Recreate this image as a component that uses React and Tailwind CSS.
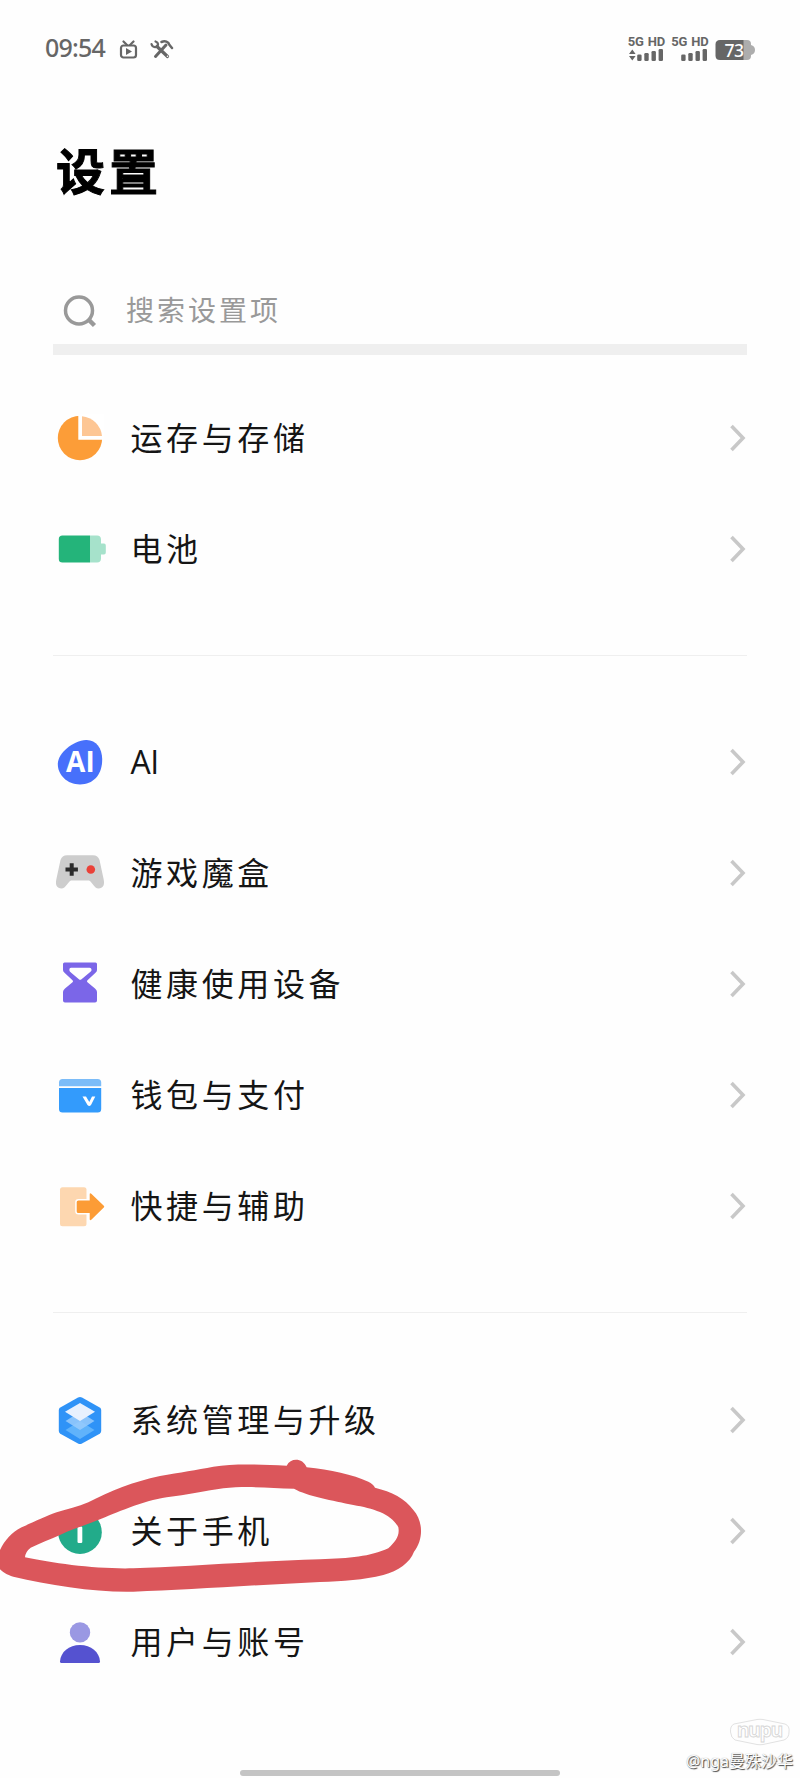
const StorageIcon = () => (
  <>
    <circle cx="26" cy="26" r="22.2" fill="#fc9d38" />
    <path d="M26 26V2H50V26Z" fill="#fff" />
    <path d="M28 24V4.2A22 22 0 0 1 48 24Z" fill="#fdc694" />
    <path d="M26 3V26H49" fill="none" stroke="#fff" strokeWidth="3.4" />
  </>
);

const BatteryIcon = () => (
  <>
    <path d="M36 12.5H43Q47 12.5 47 16.5V20.500H50Q51.800 20.500 51.800 22.500V29.500Q51.800 31.500 50 31.500H47V35.500Q47 39.500 43 39.500H36Z" fill="#a6e2cb" />
    <path d="M36 12.5H8.5Q4.8 12.5 4.8 16V36Q4.8 39.5 8.5 39.5H36Z" fill="#24b47a" />
  </>
);

const AiIcon = () => (
  <>
    <path d="M32 3.9C42 3.5 48 12 48.2 23C48.4 38 40 48.4 26 48.4C13 48.4 3.8 39 3.8 28C3.8 17 19 4.5 32 3.9Z" fill="#4770fb" />
    <text x="26.4" y="36.2" textAnchor="middle" fontSize="28" fontWeight="700" fill="#fff" fontFamily="Open Sans, sans-serif" textLength="29">AI</text>
  </>
);

const GameIcon = () => (
  <>
    <path d="M13 8.2H39Q44 8.2 45.5 13L49.6 32C51 38 49 41.5 44.5 41.5C40 41.5 38.5 35 35 33.5H17C13.5 35 12 41.5 7.5 41.5C3 41.5 1 38 2.4 32L6.5 13Q8 8.2 13 8.2Z" fill="#cdcdcd" />
    <path d="M17.7 16.3V28.7M11.5 22.5H23.9" stroke="#2b2b2b" strokeWidth="4" />
    <circle cx="36.8" cy="22.5" r="4.3" fill="#ea4138" />
  </>
);

const HourglassIcon = () => (
  <>
    <path d="M10.5 4.5H41.5Q43 4.5 43 6V12Q43 13.5 41.5 14.8L33.5 22.3Q32.3 23.3 33.5 24.3L41 30.5Q43 32 43 34V42.5Q43 44.5 41 44.5H11Q9 44.5 9 42.5V34Q9 32 11 30.5L18.5 24.3Q19.7 23.3 18.5 22.3L10.5 14.8Q9 13.5 9 12V6Q9 4.5 10.5 4.5Z" fill="#7b66e8" />
    <path d="M17 9.8H35.5Q37.7 9.8 37.5 12.5Q37.3 13.3 35 15L27.5 21.2Q26.2 22.3 24.9 21.2L17.5 15Q15.3 13.3 15.3 12Q15.3 9.8 17 9.8Z" fill="#fff" />
  </>
);

const WalletIcon = () => (
  <>
    <path d="M5 17.3V13.5Q5 10 8.5 10H43.7Q47.2 10 47.2 13.5V17.3Z" fill="#7bbcf8" />
    <path d="M5 18.9H47.2V40Q47.2 43.6 43.7 43.6H8.5Q5 43.6 5 40Z" fill="#339bfc" />
    <path d="M28.5 27.5H32L35.3 33L38 27.5H41.3L37 36Q35.3 38 33.5 36Z" fill="#fff" />
  </>
);

const ShortcutIcon = () => (
  <>
    <rect x="6" y="7.2" width="26.5" height="39" rx="2.5" fill="#fdd7b0" />
    <path
      d="M24.5 20.5H35.7V14.5Q35.7 12.5 37.3 13.8L49.8 25.8Q50.8 26.7 49.8 27.6L37.3 39.8Q35.7 41 35.7 39V33H24.5Q22.7 33 22.7 31.5V22Q22.7 20.5 24.5 20.5Z"
      fill="#fc9c36"
      stroke="#fff"
      strokeWidth="3"
      paintOrder="stroke"
    />
  </>
);

const SystemIcon = () => (
  <>
    <path d="M24 3.6Q26 2.5 28 3.6L45.7 13.4Q47.2 14.3 47.2 16V37Q47.2 38.8 45.7 39.7L28 49.5Q26 50.6 24 49.5L6.3 39.7Q4.8 38.8 4.8 37V16Q4.8 14.3 6.3 13.4Z" fill="#2f93f7" />
    <path d="M26 27L40.5 36L26 45L11.5 36Z" fill="#60b3fb" />
    <path d="M26 18L40.5 27L26 36L11.5 27Z" fill="#99cbfc" fillOpacity="0.85" />
    <path d="M26 9L41 17.7L26 27L11 17.7Z" fill="#e8f1fe" />
  </>
);

const AboutIcon = () => (
  <>
    <circle cx="26" cy="27.2" r="21.8" fill="#22ab8a" />
    <circle cx="26" cy="16" r="2.7" fill="#fff" />
    <rect x="23.5" y="21.5" width="4.8" height="16.5" rx="1.2" fill="#fff" />
  </>
);

const UserIcon = () => (
  <>
    <circle cx="26" cy="16.4" r="10.2" fill="#9a98e3" />
    <path d="M6 45.5C6.5 36 15 29 26 29C37 29 45.5 36 46 45.5Q46 47 44.5 47H7.5Q6 47 6 45.5Z" fill="#5552d0" />
  </>
);

const groups = [
  [
    { label: '运存与存储', Icon: StorageIcon },
    { label: '电池', Icon: BatteryIcon },
  ],
  [
    { label: 'AI', Icon: AiIcon },
    { label: '游戏魔盒', Icon: GameIcon },
    { label: '健康使用设备', Icon: HourglassIcon },
    { label: '钱包与支付', Icon: WalletIcon },
    { label: '快捷与辅助', Icon: ShortcutIcon },
  ],
  [
    { label: '系统管理与升级', Icon: SystemIcon },
    { label: '关于手机', Icon: AboutIcon },
    { label: '用户与账号', Icon: UserIcon },
  ],
];

function Row({ label, Icon }) {
  return (
    <div className="flex h-[111px] items-center pl-[54px] pr-[53px]">
      <svg className="h-[52px] w-[52px] shrink-0" viewBox="0 0 52 52">
        <Icon />
      </svg>
      <span className={`ml-[24.5px] flex-1 whitespace-nowrap pt-px text-[32px] leading-[48px] text-[#151515] ${label === 'AI' ? 'font-["Open_Sans","Noto_Sans_CJK_SC",sans-serif] tracking-[-0.5px]' : 'tracking-[3.6px]'}`}>
        {label}
      </span>
      <svg className="h-7 w-5" viewBox="0 0 20 28" fill="none" stroke="#c8c8c8" strokeWidth="3.6">
        <path d="M4.5 2L16 14L4.5 26" />
      </svg>
    </div>
  );
}

function Signal({ arrows }) {
  return (
    <div className="flex w-[37px] flex-col items-end">
      <span className='h-3 whitespace-nowrap font-["Roboto",sans-serif] text-[13px] font-bold leading-3 tracking-[-0.2px] [word-spacing:1px]'>5G HD</span>
      <svg className="mt-px h-3 w-[37px]" viewBox="0 0 37 12" fill="#666">
        {arrows ? <path d="M1 5L4.3 0.5L7.6 5ZM1 7L4.3 11.5L7.6 7Z" /> : null}
        <rect x="9.2" y="5.5" width="4.4" height="6.5" rx="1.3" />
        <rect x="16.3" y="4" width="4.4" height="8" rx="1.3" />
        <rect x="23.5" y="2" width="4.4" height="10" rx="1.3" />
        <rect x="30.6" y="0" width="4.4" height="12" rx="1.3" />
      </svg>
    </div>
  );
}

function StatusBar() {
  return (
    <div className="flex h-[98px] items-start justify-between px-[45px] text-[#666]">
      <div className="flex pt-8">
        <span className="-mt-px w-[74px] text-[25px] font-medium leading-8 tracking-[-0.8px]">09:54</span>
        <svg className="mt-2 h-5 w-5" viewBox="0 0 20 20" fill="none" stroke="#666" strokeWidth="2.2" strokeLinecap="round">
          <rect x="2" y="5.5" width="15" height="12" rx="2.5" />
          <path d="M4.5 1.5L8 5M14.5 1.5L11 5" />
          <path d="M7 8L13 11.5L7 15Z" fill="#666" stroke="none" />
        </svg>
        <svg className="ml-[11px] mt-2 h-5 w-6" viewBox="0 0 24 20" fill="none" stroke="#666" strokeLinecap="round">
          <path d="M5.5 16.5L16 5" strokeWidth="3" />
          <path d="M11.5 2C15 0.5 18.5 1.5 19.5 5L22 8" strokeWidth="2.5" />
          <path d="M7 6.5L17.5 16.5" strokeWidth="3.2" />
          <path d="M1.5 4C2.5 8 7.5 8 8 4.5C8 3 7 2 5.5 1.5" strokeWidth="2.2" />
          <circle cx="17.5" cy="16.3" r="0.8" fill="#fff" stroke="none" />
        </svg>
      </div>
      <div className="flex pt-9">
        <Signal arrows />
        <div className="ml-[6.5px]"><Signal /></div>
        <div className="relative ml-[6.5px] mt-1 h-5 w-10">
          <svg className="h-5 w-10" viewBox="0 0 40 20">
            <path d="M28 0H32Q36 0 36 4V5Q40 6 40 10Q40 14 36 15V16Q36 20 32 20H28Z" fill="#adadad" />
            <path d="M28.5 0H5Q0.5 0 0.5 4.5V15.5Q0.5 20 5 20H28.5Z" fill="#666" />
          </svg>
          <span className="absolute left-[9.5px] top-0 text-[17.5px] font-medium leading-5 tracking-[-0.5px] text-white">73</span>
        </div>
      </div>
    </div>
  );
}

// Hand-drawn ring around the "about phone" row
function Scribble() {
  return (
    <svg className="absolute left-0 top-[1440px] h-[170px] w-[440px]" viewBox="0 0 1320 510">
      <path
        fillRule="evenodd"
        fill="#db565b"
        d="M0 330C15 300 35 277 65 262C100 246 140 228 170 217C200 207 235 200 265 187C330 153 400 125 480 108C540 97 590 90 640 80C700 70 780 73 860 77C872 53 908 53 920 82C990 88 1060 105 1105 125Q1120 132 1125 143C1175 155 1215 175 1240 210C1271 245 1270 300 1242 335C1230 368 1195 392 1150 405C1090 420 1030 424 960 426C760 435 560 450 400 455C290 458 150 435 40 410C20 405 8 395 0 388ZM75 352Q76 335 92 323C120 310 150 298 180 285C220 265 260 255 300 238C340 222 430 182 500 172C560 165 620 152 670 145C740 137 810 144 882 146C920 168 1000 182 1060 195C1120 205 1175 222 1195 262C1200 288 1186 305 1165 325C1110 350 1050 355 960 358C770 363 550 380 400 385C290 388 160 370 75 352Z"
      />
    </svg>
  );
}

export default function App() {
  return (
    <div className='relative h-[1778px] w-[800px] overflow-hidden bg-[#fefefe] font-["Noto_Sans","Noto_Sans_CJK_SC",sans-serif]'>
      <StatusBar />
      <h1 className="ml-[56px] mt-[36px] h-[76px] text-[49px] font-bold leading-[74px] tracking-[4px] text-black [-webkit-text-stroke:1px_#000]">设置</h1>
      <div className="mx-[53px] flex h-[145px] items-end border-b-[11px] border-[#efefef] pb-[14px]">
        <svg className="mb-px ml-2 h-9 w-9" viewBox="0 0 36 36" fill="none" stroke="#999" strokeWidth="3.5">
          <circle cx="18" cy="17.5" r="13.5" />
          <path d="M27.5 26.5L33.5 32.5" strokeWidth="4.5" />
        </svg>
        <span className="ml-[29px] text-[28px] leading-[40px] tracking-[3px] text-[#999]">搜索设置项</span>
      </div>
      <div className="pt-[27px]">
        {groups.map((rows, i) => (
          <div key={i}>
            {i > 0 ? <div className={`mx-[53px] mt-[51px] h-px bg-[#efefef] ${i === 1 ? 'mb-[50px]' : 'mb-[51px]'}`} /> : null}
            {rows.map((row) => <Row key={row.label} {...row} />)}
          </div>
        ))}
      </div>
      <Scribble />
      <div className="absolute right-[7px] top-[1718px] flex flex-col items-end">
        <svg className="mr-0.5 h-7 w-[62px]" viewBox="0 0 62 28" fill="none" stroke="#e2e2e2">
          <path d="M5 6L28 1.5Q31 1 34 1.5L56 6Q61 8 60 14Q60 20 55 22L34 26.5Q31 27 28 26.5L6 22Q2 20 1.5 14Q1 8 5 6Z" />
          <text x="31" y="18.5" textAnchor="middle" fontSize="19" fontWeight="700" fontFamily="Noto Sans, sans-serif" textLength="46" fill="#fff" stroke="#d6d6d6" strokeWidth="0.9">nupu</text>
        </svg>
        <span className="mt-[3px] whitespace-nowrap text-[16px] leading-6 text-white [text-shadow:1px_1px_1px_#444,0_0_1px_#999]">@nga曼殊沙华</span>
      </div>
      <div className="absolute left-[240px] top-[1770px] h-1.5 w-80 rounded-full bg-[#c4c4c4]" />
    </div>
  );
}
